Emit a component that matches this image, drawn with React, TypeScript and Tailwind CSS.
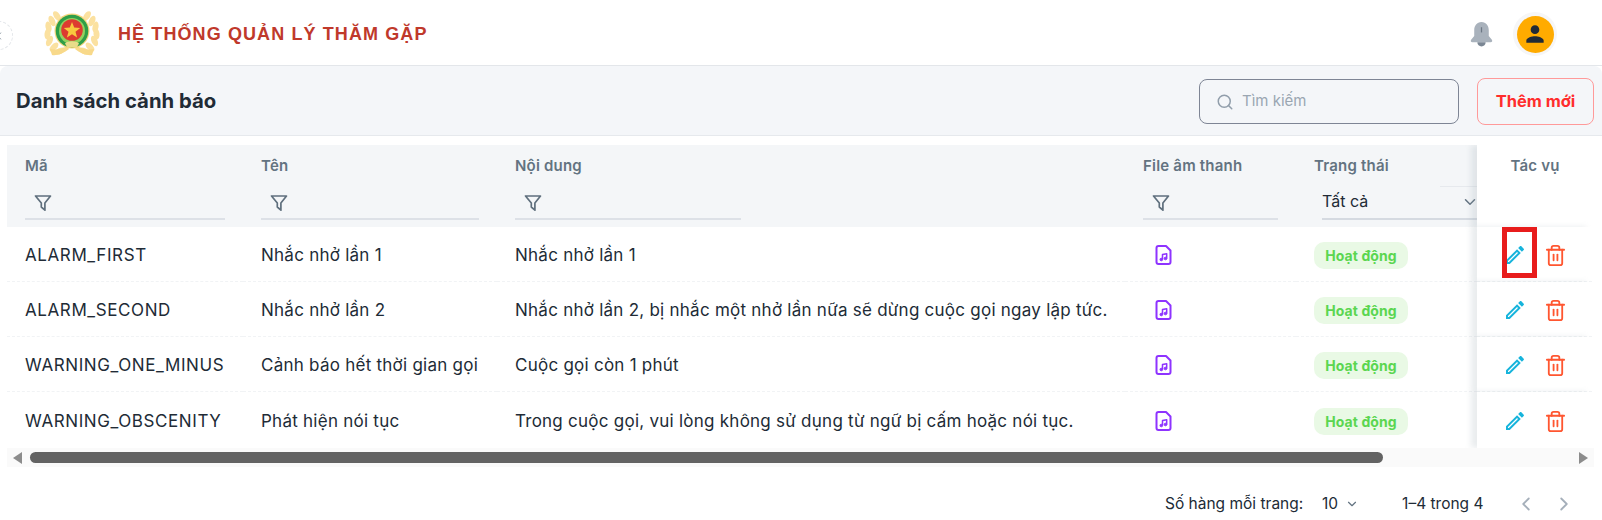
import { ChevronDown, ChevronLeft, ChevronRight, Search, Trash2 } from "lucide-react";

const rows = [
  { code: "ALARM_FIRST", name: "Nhắc nhở lần 1", content: "Nhắc nhở lần 1" },
  {
    code: "ALARM_SECOND",
    name: "Nhắc nhở lần 2",
    content: "Nhắc nhở lần 2, bị nhắc một nhở lần nữa sẽ dừng cuộc gọi ngay lập tức.",
  },
  { code: "WARNING_ONE_MINUS", name: "Cảnh báo hết thời gian gọi", content: "Cuộc gọi còn 1 phút" },
  {
    code: "WARNING_OBSCENITY",
    name: "Phát hiện nói tục",
    content: "Trong cuộc gọi, vui lòng không sử dụng từ ngữ bị cấm hoặc nói tục.",
  },
];

const gridCols = "grid grid-cols-[236px_254px_628px_171px_181px_115px]";

// leaves of the wreath: x, y, rotation
const leaves = [
  [13, 5, -35],
  [8, 10, -25],
  [4.500, 16, -12],
  [3.500, 23, 5],
  [5.500, 30, 25],
  [10, 36, 45],
  [16, 40, 65],
];

function Logo() {
  return (
    <svg width="56" height="46" viewBox="0 0 56 46" className="shrink-0">
      <g fill="#fbe1a0">
        {leaves.map(([x, y, r]) => (
          <ellipse key={`l${y}`} cx={x} cy={y} rx="3" ry="5.500" transform={`rotate(${r} ${x} ${y})`} />
        ))}
        {leaves.map(([x, y, r]) => (
          <ellipse key={`r${y}`} cx={56 - x} cy={y} rx="3" ry="5.500" transform={`rotate(${-r} ${56 - x} ${y})`} />
        ))}
        <path d="M6 38c6 1 12 0 17-3l2 3c-5 4-12 7-17 6zM50 38c-6 1-12 0-17-3l-2 3c5 4 12 7 17 6z" fill="#f8d98a" />
      </g>
      <circle cx="28" cy="20" r="17.500" fill="#f6d67e" />
      <circle cx="28" cy="20" r="16.300" fill="#2f9e48" />
      <circle cx="28" cy="20" r="13" fill="#93d25f" />
      <circle cx="28" cy="19" r="10.800" fill="#dd3b30" />
      <path d="M28 11l2.200 5.600 6 .3-4.700 3.800 1.600 5.800-5.100-3.300-5.100 3.300 1.600-5.800-4.700-3.800 6-.3z" fill="#f8c93e" />
      <path d="M21 32.500c2-3 12-3 14 0l-2 3.500H23z" fill="#e8dc8a" />
    </svg>
  );
}

function FilterIcon() {
  return (
    <svg width="18" height="18" viewBox="0 0 18 18" fill="none" stroke="#5f6f7d" strokeWidth="1.700" strokeLinejoin="round">
      <path d="M1.500 2h15l-5.600 7v7.200L7.300 13V9z" />
    </svg>
  );
}

function MusicFile() {
  return (
    <svg width="24" height="24" viewBox="0 0 24 24" fill="none" stroke="#8e33ff" strokeWidth="2" strokeLinejoin="round">
      <path d="M6.500 3h7.500l4.500 4.500V19a2 2 0 0 1-2 2H6.500a2 2 0 0 1-2-2V5a2 2 0 0 1 2-2z" />
      <path d="M10.500 16.500v-5l4.200-.8v4.800" strokeWidth="1.500" />
      <circle cx="9.300" cy="16.500" r="1.300" fill="#8e33ff" strokeWidth="1" />
      <circle cx="13.500" cy="15.500" r="1.300" fill="#8e33ff" strokeWidth="1" />
    </svg>
  );
}

function PencilIcon() {
  return (
    <svg width="24" height="24" viewBox="0 0 24 24" fill="#16b4dc">
      <path d="M14.060 9.020l.92.92L5.920 19H5v-.92l9.060-9.060M17.660 3c-.25 0-.51.1-.7.29l-1.830 1.830 3.750 3.750 1.830-1.830c.39-.39.39-1.020 0-1.410l-2.340-2.340c-.2-.2-.45-.29-.71-.29zm-3.600 3.190L3 17.250V21h3.750L17.810 9.940l-3.750-3.750z" />
    </svg>
  );
}

function BellIcon() {
  return (
    <svg width="25" height="27" viewBox="0 0 24 26">
      <path d="M12 1c-4.500 0-7 3.500-7 8v5.500L2 18c-.8 1.200-.2 2.500 1.300 2.500h17.400c1.500 0 2.100-1.300 1.300-2.500l-3-3.500V9c0-4.500-2.500-8-7-8z" fill="#a9b2bc" />
      <path d="M8 20.500h8c0 2.500-1.800 4-4 4s-4-1.500-4-4z" fill="#7b8794" />
      <rect x="11.400" y="6" width="1.200" height="5" fill="#6d7885" />
    </svg>
  );
}

function ScrollArrow({ dir }: { dir: "left" | "right" }) {
  return (
    <svg width="9" height="12" viewBox="0 0 9 12" fill="#8c8c8c" className="shrink-0">
      {dir === "left" ? <path d="M9 0v12L0 6z" /> : <path d="M0 0v12l9-6z" />}
    </svg>
  );
}

function AlarmRow({ row, first, last }: { row: (typeof rows)[number]; first: boolean; last: boolean }) {
  const line = last ? "" : "border-b border-dashed border-[#f1f3f5]";
  return (
    <div className={`${gridCols} ${last ? "h-[56px]" : "h-[55px]"} text-[17px] tracking-[0.25px] text-[#212b36]`}>
      <div className={`flex items-center whitespace-nowrap pl-[18px] pt-[4px] tracking-[0.6px] ${line}`}>{row.code}</div>
      <div className={`flex items-center whitespace-nowrap pl-[18px] pt-[4px] ${line}`}>{row.name}</div>
      <div className={`flex items-center whitespace-nowrap pl-[18px] pt-[4px] ${line}`}>{row.content}</div>
      <div className={`flex items-center pl-[27px] pt-[2px] ${line}`}>
        <MusicFile />
      </div>
      <div className={`flex items-center pl-[18px] pt-[2px] ${line}`}>
        <span className="flex h-[27px] w-[94px] items-center justify-center rounded-[10px] bg-[#e9f9e5] text-[14px] font-bold tracking-[0.1px] text-[#5bd651]">
          Hoạt động
        </span>
      </div>
      <div className={`relative flex items-center gap-[17px] bg-white pl-[26px] pt-[2px] shadow-[-6px_0_6px_rgba(145,158,171,0.2)] ${line}`}>
        <PencilIcon />
        <Trash2 size={23} strokeWidth={1.900} className="text-[#ff5630]" />
        {first && <div className="absolute left-[25px] top-0 h-[51px] w-[35px] border-[5px] border-[#e81c1c]" />}
      </div>
    </div>
  );
}

export default function App() {
  return (
    <div className="relative h-[520px] w-[1602px] overflow-hidden bg-white font-['Inter','Liberation_Sans',sans-serif]">
      {/* sidebar toggle */}
      <div className="absolute -left-[16px] top-[21px] flex h-[29px] w-[29px] items-center justify-center rounded-full border border-dashed border-[#e3e6ea] bg-white">
        <ChevronLeft size={12} className="text-[#637381]" />
      </div>

      <header className="flex h-[66px] items-center border-b border-[#e3e6ea] pl-[44px] pr-[45px] pt-[3px]">
        <Logo />
        <h1 className="ml-[18px] font-['Liberation_Sans',sans-serif] text-[18px] font-bold tracking-[1.1px] text-[#c0392b]">
          HỆ THỐNG QUẢN LÝ THĂM GẶP
        </h1>
        <div className="ml-auto flex items-center gap-[19px]">
          <BellIcon />
          <div className="flex h-[44px] w-[44px] items-center justify-center rounded-full bg-[#f6f6f7]">
            <div className="flex h-[37px] w-[37px] items-center justify-center rounded-full bg-[#ffab00]">
              <svg width="26" height="26" viewBox="0 0 24 24" fill="#212b36">
                <path d="M12 12c2.210 0 4-1.790 4-4s-1.790-4-4-4-4 1.790-4 4 1.790 4 4 4zm0 2c-2.670 0-8 1.340-8 4v2h16v-2c0-2.660-5.330-4-8-4z" />
              </svg>
            </div>
          </div>
        </div>
      </header>

      <section className="flex h-[70px] items-center rounded-t-lg border-b border-[#e6e9ed] bg-[#f4f6f9] pl-[16px] pr-[8px] pt-[2px]">
        <h2 className="text-[20.300px] font-bold text-[#212b36]">Danh sách cảnh báo</h2>
        <div className="ml-auto flex h-[45px] w-[260px] items-center gap-[8px] rounded-lg border border-[#7e8595] pl-[16px]">
          <Search size={18} className="text-[#919eab]" />
          <span className="text-[15px] text-[#9aa6b2]">Tìm kiếm</span>
        </div>
        <button
          type="button"
          className="ml-[18px] h-[47px] w-[117px] rounded-lg border border-[#ff9a9a] text-[16.500px] font-bold text-[#ff2d2d]"
        >
          Thêm mới
        </button>
      </section>

      <div className="mt-[9px] pl-[7px]">
        <div className="overflow-hidden">
          <div className={`${gridCols} h-[82px] text-[15px] font-semibold tracking-[0.2px] text-[#637381]`}>
            <HeaderCell label="Mã" />
            <HeaderCell label="Tên" />
            <HeaderCell label="Nội dung" lineWidth="w-[226px]" />
            <HeaderCell label="File âm thanh" />
            <div className="overflow-hidden bg-[#f4f6f8] pl-[18px] pt-[11px]">
              <div className="h-[20px] leading-[20px]">Trạng thái</div>
              <div className="ml-auto mt-[10px] h-px w-[37px] bg-[#e6e9ed]" />
              <div className="ml-[8px] mt-px flex h-[32px] w-[166px] items-start justify-between border-b-2 border-[#d5dae1] pt-[1px] text-[16px] font-normal tracking-normal text-[#212b36]">
                <span>Tất cả</span>
                <ChevronDown size={18} className="mr-[9px] mt-[4px] text-[#637381]" />
              </div>
            </div>
            <div className="relative bg-white pl-[1px] pt-[11px] text-center leading-[20px] shadow-[-6px_0_6px_rgba(145,158,171,0.2)]">
              Tác vụ
            </div>
          </div>

          {rows.map((row, i) => (
            <AlarmRow key={row.code} row={row} first={i === 0} last={i === rows.length - 1} />
          ))}
        </div>

        <div className="flex h-[19px] w-[1587px] items-center bg-[#fafafa] px-[6px]">
          <ScrollArrow dir="left" />
          <div className="ml-[8px] h-[11px] w-[1353px] rounded-full bg-[#636363]" />
          <div className="ml-auto">
            <ScrollArrow dir="right" />
          </div>
        </div>
      </div>

      <footer className="mt-[25px] flex items-center pl-[1165px] text-[15.500px] text-[#212b36]">
        <span className="w-[157px]">Số hàng mỗi trang:</span>
        <span>10</span>
        <ChevronDown size={14} className="ml-[7px] text-[#637381]" />
        <span className="ml-[43px]">1–4 trong 4</span>
        <ChevronLeft size={22} className="ml-[31px] text-[#a5afba]" />
        <ChevronRight size={22} className="ml-[16px] text-[#a5afba]" />
      </footer>
    </div>
  );
}

function HeaderCell({ label, lineWidth = "w-full" }: { label: string; lineWidth?: string }) {
  return (
    <div className="bg-[#f4f6f8] px-[18px] pt-[11px]">
      <div className="h-[20px] leading-[20px]">{label}</div>
      <div className={`mt-[12px] flex h-[32px] items-center border-b-2 border-[#dde1e7] pl-[9px] ${lineWidth}`}>
        <FilterIcon />
      </div>
    </div>
  );
}
